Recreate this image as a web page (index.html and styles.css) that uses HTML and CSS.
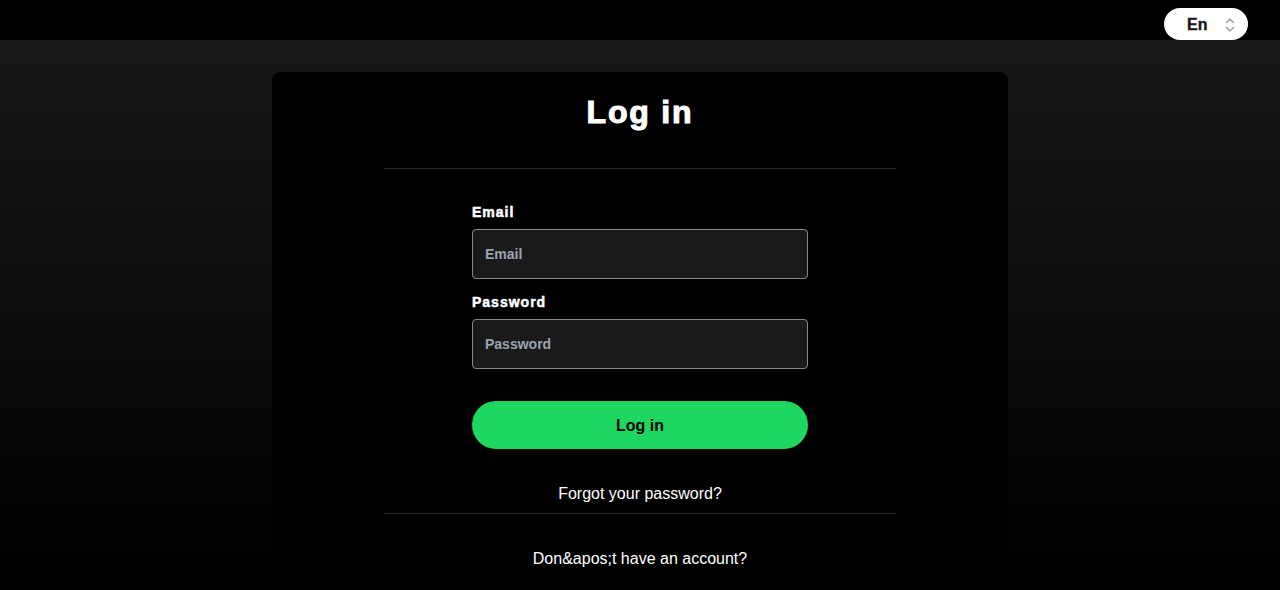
FILE: index.html
```html
<!DOCTYPE html>
<html lang="en">
<head>
<meta charset="utf-8">
<title>Log in</title>
<link rel="stylesheet" href="styles.css">
</head>
<body>
<header class="topbar">
  <div class="lang">
    <span class="lang-text">En</span>
    <svg class="lang-icon" width="10" height="16" viewBox="0 0 10 16" fill="none" stroke="currentColor" stroke-width="1.5" stroke-linecap="round" stroke-linejoin="round"><path d="M1.5 5.5 L5 2 L8.5 5.5"/><path d="M1.5 10.5 L5 14 L8.5 10.5"/></svg>
  </div>
</header>
<main class="page">
  <section class="card">
    <h1 class="title">Log in</h1>
    <hr class="divider">
    <form class="form">
      <label class="label" for="email">Email</label>
      <input class="input" id="email" type="text" placeholder="Email">
      <label class="label label-gap" for="password">Password</label>
      <input class="input" id="password" type="password" placeholder="Password">
      <button class="btn" type="button">Log in</button>
    </form>
    <p class="link first">Forgot your password?</p>
    <hr class="divider small">
    <p class="link last">Don&amp;apos;t have an account?</p>
  </section>
</main>
</body>
</html>
```
FILE: styles.css
```css
* { box-sizing: border-box; }
html, body { margin: 0; padding: 0; }
body {
  background: #000;
  font-family: "Liberation Sans", Arial, sans-serif;
  color: #fff;
  height: 590px;
  overflow: hidden;
}
.topbar {
  height: 40px;
  background: #000;
  display: flex;
  justify-content: flex-end;
  align-items: flex-start;
  padding: 8px 32px 0 0;
}
.lang {
  width: 84px;
  height: 32px;
  background: #fff;
  border-radius: 16px;
  display: flex;
  align-items: center;
  padding: 1px 13px 0 23px;
  justify-content: space-between;
}
.lang-text {
  color: #18181b;
  font-weight: 700;
  font-size: 16px;
  -webkit-text-stroke: 0.4px;
}
.lang-icon { color: #a1a1aa; }
.page {
  background: linear-gradient(to bottom, #18181b 0%, #000 100%);
  height: 550px;
  padding-top: 32px;
}
.card {
  width: 736px;
  margin: 0 auto;
  background: #000;
  border-radius: 8px;
  padding-top: 20px;
  height: 600px;
}
.title {
  margin: 0;
  font-size: 32px;
  line-height: 40px;
  font-weight: 700;
  text-align: center;
  letter-spacing: 1.8px;
  -webkit-text-stroke: 1.1px;
}
.divider {
  width: 512px;
  margin: 36px auto 0;
  border: 0;
  border-top: 1px solid #2a2a2a;
  height: 0;
}
.form {
  width: 336px;
  margin: 33px auto 0;
  display: flex;
  flex-direction: column;
}
.label {
  font-size: 14px;
  line-height: 20px;
  font-weight: 700;
  margin-bottom: 7px;
  letter-spacing: 1px;
  -webkit-text-stroke: 0.5px;
}
.label-gap { margin-top: 13px; }
.input {
  height: 50px;
  background: #1a1a1d;
  border: 1px solid #878787;
  border-radius: 4px;
  padding: 0 12px;
  color: #fff;
  font-family: inherit;
  font-size: 14px;
  font-weight: 700;
  outline: none;
}
.input::placeholder { color: #9ca3af; }
.btn {
  margin-top: 32px;
  height: 48px;
  border: 0;
  border-radius: 24px;
  background: #1ed760;
  color: #000;
  font-family: inherit;
  font-size: 16px;
  font-weight: 700;
  padding-top: 2px;
}
.link {
  margin: 0;
  text-align: center;
  font-size: 16px;
  line-height: 24px;
}
.link.first { margin-top: 33px; }
.divider.small { margin-top: 7px; }
.link.last { margin-top: 33px; }
```
